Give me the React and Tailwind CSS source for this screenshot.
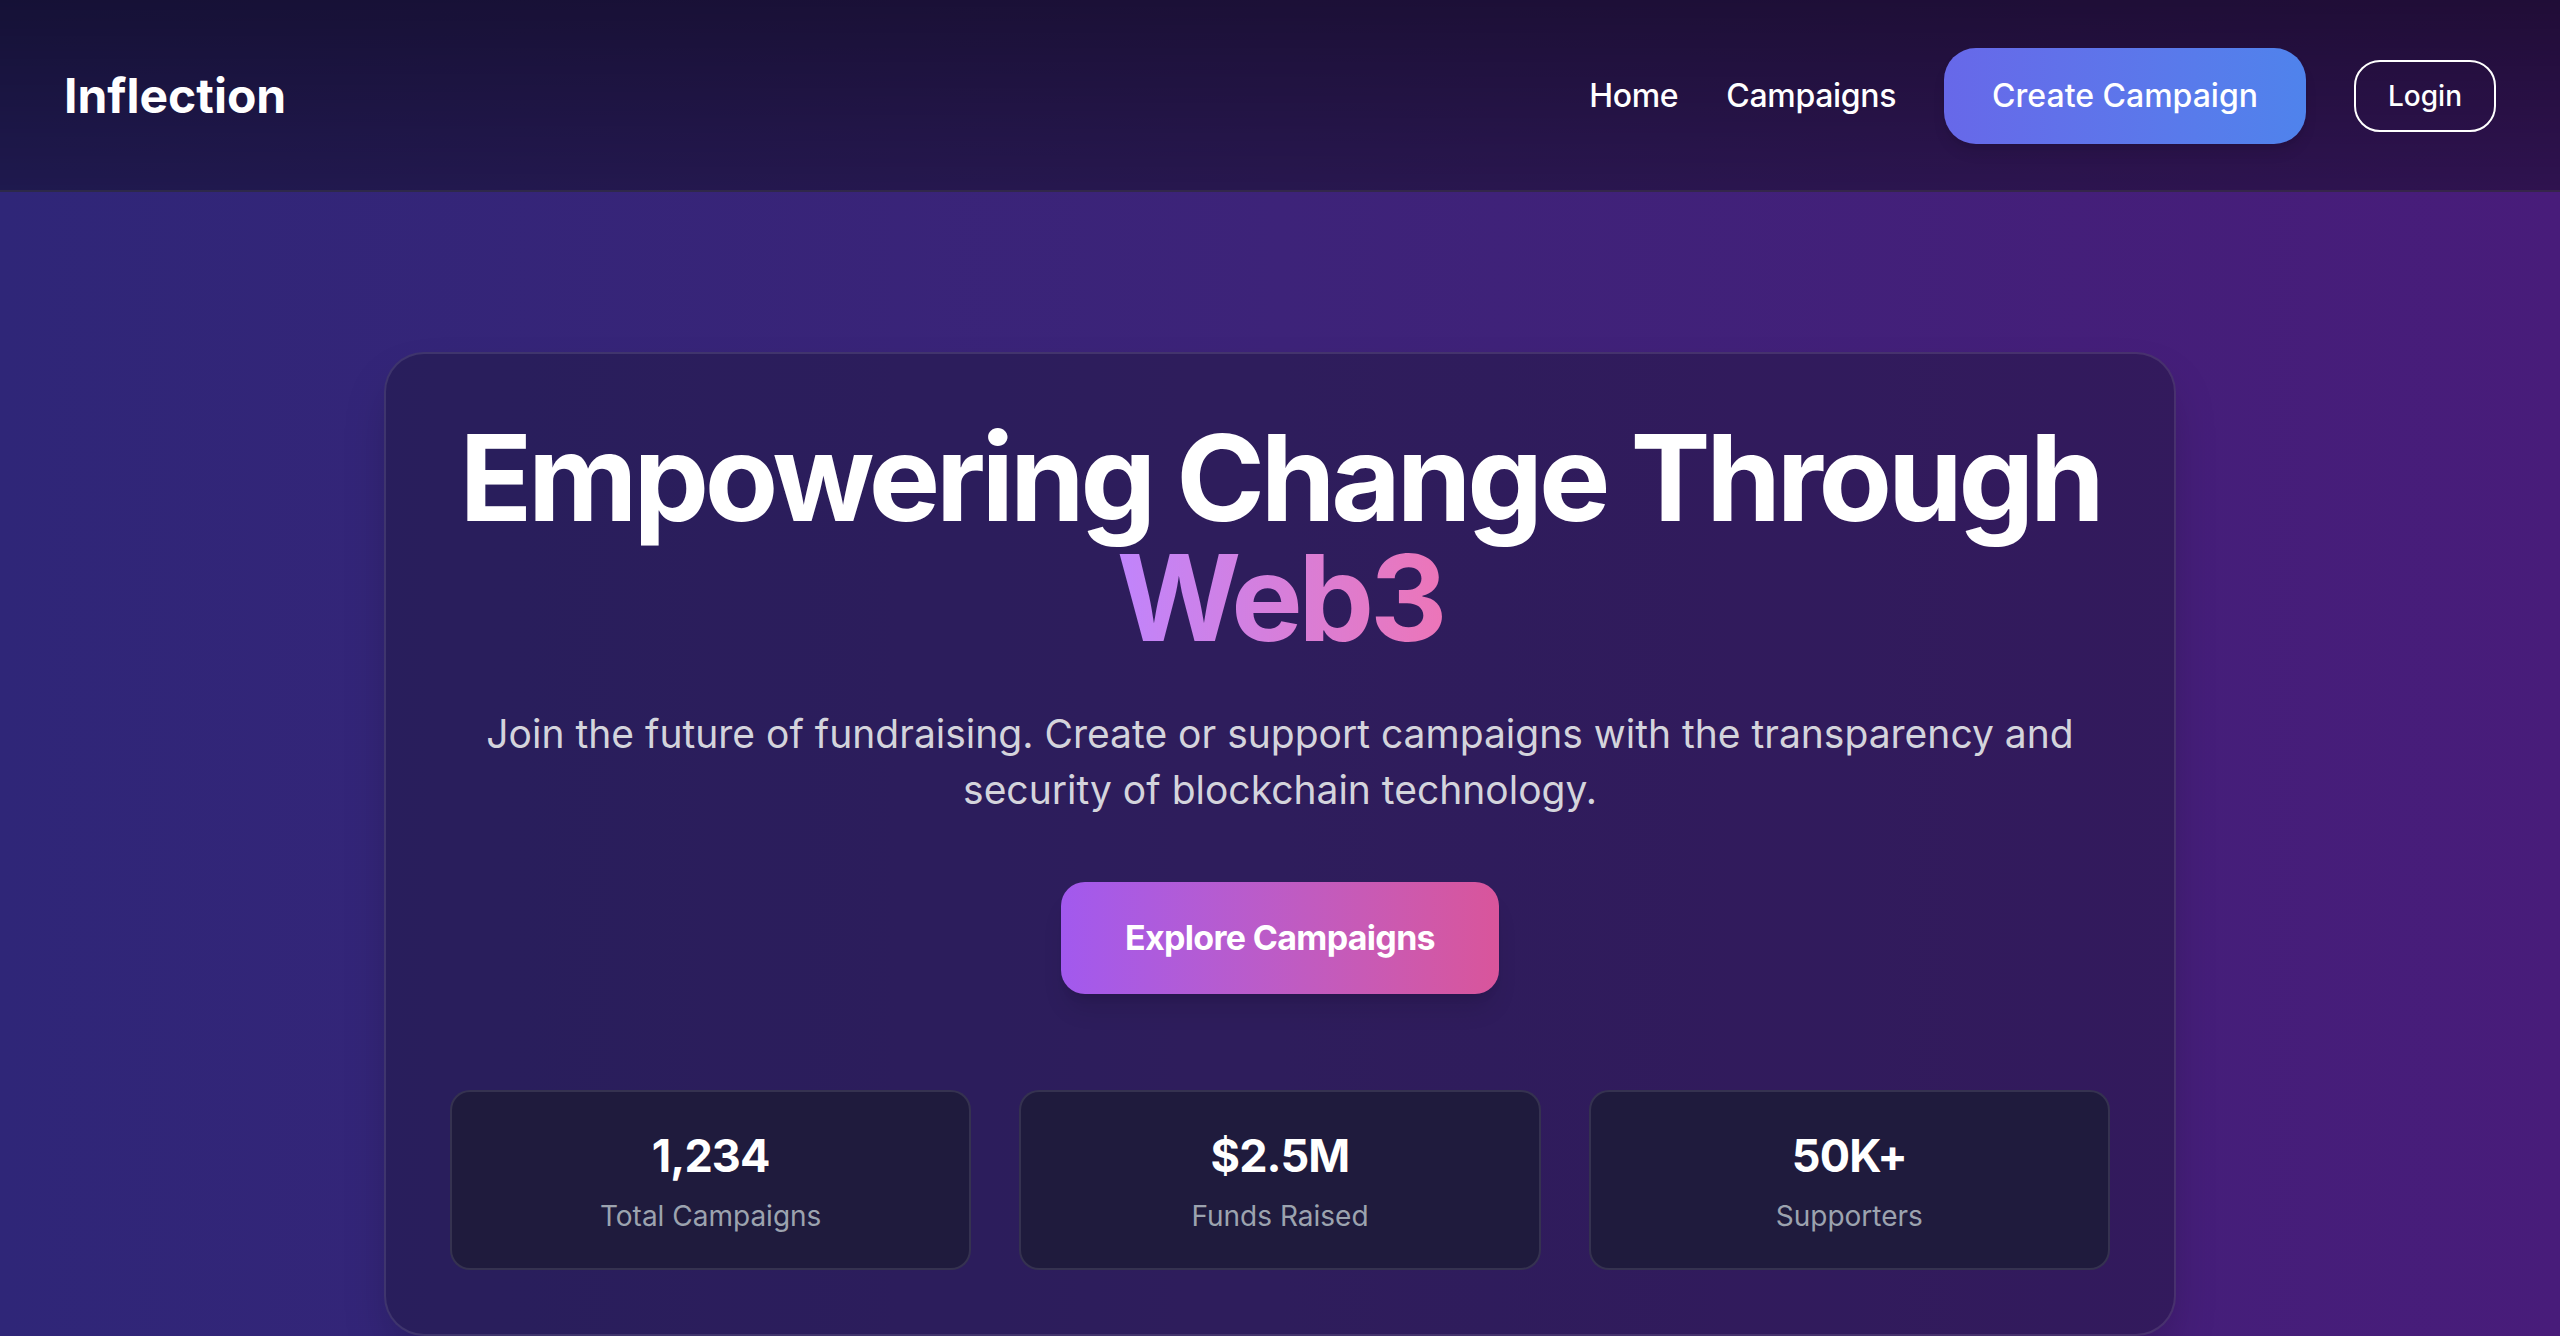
import React from 'react';

const stats = [
  { value: '1,234', label: 'Total Campaigns' },
  { value: '$2.5M', label: 'Funds Raised' },
  { value: '50K+', label: 'Supporters' },
];

export default function App() {
  return (
    <div className="min-h-screen bg-gradient-to-r from-[#2f2678] via-[#3d2379] to-[#481c7a] font-['Inter','Noto_Sans',sans-serif] text-white">
      {/* Navbar */}
      <nav className="h-[192px] px-[64px] pt-[2px] flex items-center justify-between border-b-2 border-white/10 bg-gradient-to-b from-black/55 to-black/35">
        <a href="#" className="text-[48px] leading-[64px] font-bold">
          Inflection
        </a>
        <div className="flex items-center gap-[48px]">
          <a href="#" className="text-[32px] leading-[48px] font-medium tracking-[-0.01em]">Home</a>
          <a href="#" className="text-[32px] leading-[48px] font-medium tracking-[-0.01em]">Campaigns</a>
          <button className="px-[48px] py-[24px] rounded-[32px] text-[32px] leading-[48px] font-medium bg-gradient-to-r from-[#6768e9] to-[#4f83ec] shadow-lg">
            Create Campaign
          </button>
          <button className="px-[32px] py-[14px] rounded-[26px] border-2 border-white text-[28px] leading-[40px] font-medium">
            Login
          </button>
        </div>
      </nav>

      {/* Hero */}
      <section className="flex justify-center pt-[160px] pb-[160px]">
        <div className="w-[1792px] rounded-[40px] border-2 border-white/10 bg-[#1a1433]/40 p-[64px] text-center shadow-2xl">
          <h1 className="text-[120px] leading-[120px] font-bold tracking-[-0.035em] mb-[48px] whitespace-nowrap">
            Empowering Change Through
            <br />
            <span className="bg-gradient-to-r from-[#c084fc] to-[#ec75b8] bg-clip-text text-transparent">Web3</span>
          </h1>
          <p className="text-[39px] leading-[56px] text-[#d4d4dc] mb-[64px]">
            Join the future of fundraising. Create or support campaigns with the transparency and security of blockchain technology.
          </p>
          <div>
            <button className="px-[64px] py-[28px] rounded-[24px] text-[34px] leading-[56px] font-bold tracking-[-0.02em] bg-gradient-to-r from-[#a259ee] to-[#d9559b] shadow-xl">
              Explore Campaigns
            </button>
          </div>

          <div className="grid grid-cols-3 gap-[48px] mt-[96px]">
            {stats.map((s) => (
              <div key={s.label} className="rounded-[20px] border-2 border-white/10 bg-[#1f1b3d] p-[32px]">
                <div className="text-[45px] leading-[64px] font-bold tracking-[-0.02em] mb-[8px]">{s.value}</div>
                <div className="text-[28px] leading-[40px] text-[#9ca3af]">{s.label}</div>
              </div>
            ))}
          </div>
        </div>
      </section>
    </div>
  );
}
